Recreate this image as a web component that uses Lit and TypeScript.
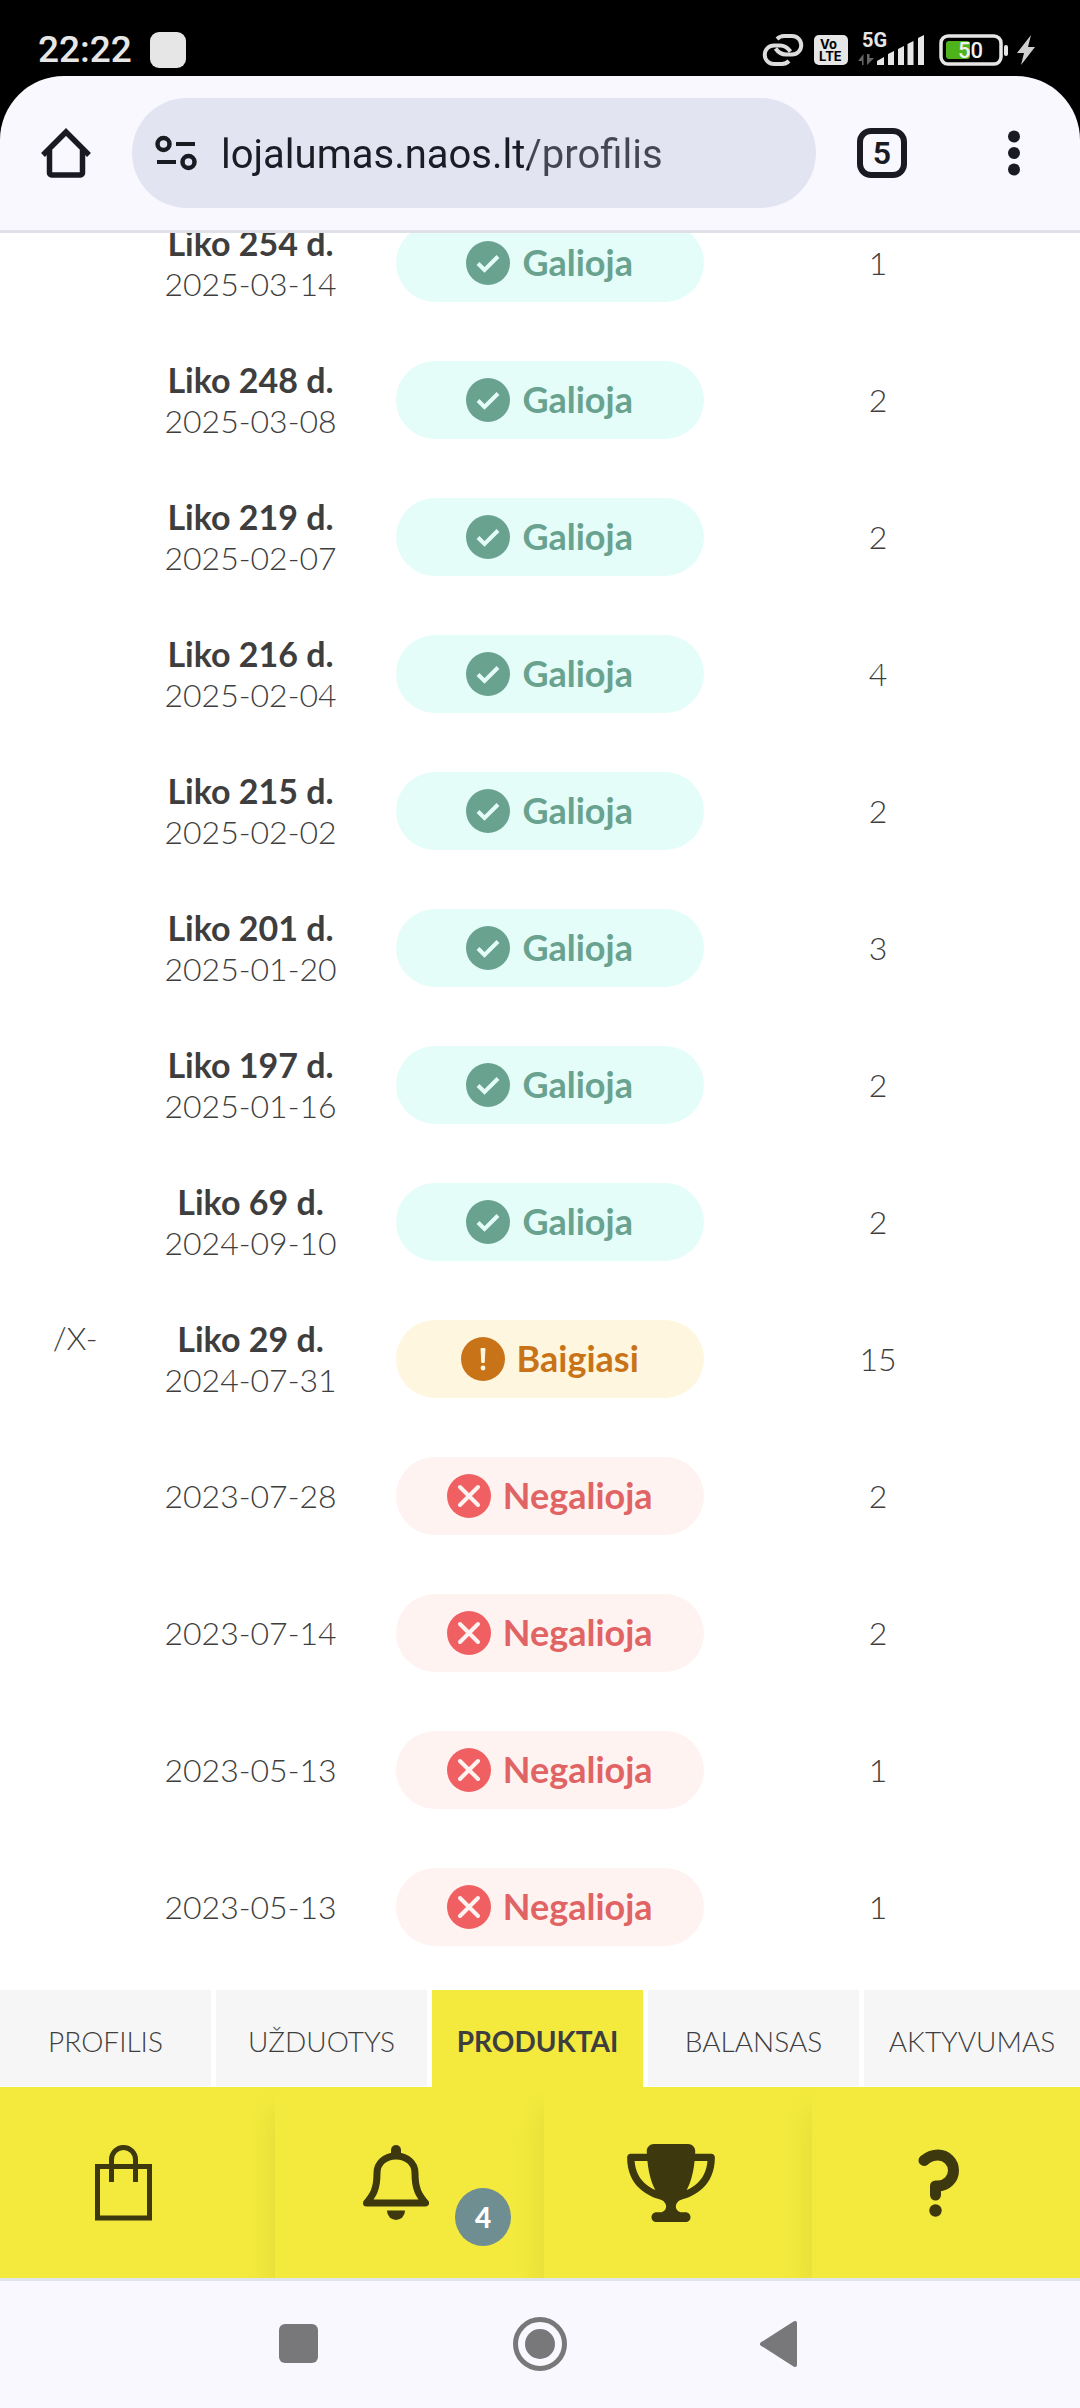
import { LitElement, html, css, svg } from "lit";
import { customElement, property } from "lit/decorators.js";
import { classMap } from "lit/directives/class-map.js";

type Status = "valid" | "ending" | "expired";

interface ProductRow {
  product?: string;
  left?: number;
  date: string;
  status: Status;
  count: number;
}

const ROWS: ProductRow[] = [
  { left: 254, date: "2025-03-14", status: "valid", count: 1 },
  { left: 248, date: "2025-03-08", status: "valid", count: 2 },
  { left: 219, date: "2025-02-07", status: "valid", count: 2 },
  { left: 216, date: "2025-02-04", status: "valid", count: 4 },
  { left: 215, date: "2025-02-02", status: "valid", count: 2 },
  { left: 201, date: "2025-01-20", status: "valid", count: 3 },
  { left: 197, date: "2025-01-16", status: "valid", count: 2 },
  { left: 69, date: "2024-09-10", status: "valid", count: 2 },
  { product: "/X-", left: 29, date: "2024-07-31", status: "ending", count: 15 },
  { date: "2023-07-28", status: "expired", count: 2 },
  { date: "2023-07-14", status: "expired", count: 2 },
  { date: "2023-05-13", status: "expired", count: 1 },
  { date: "2023-05-13", status: "expired", count: 1 },
];

const LABELS: Record<Status, string> = {
  valid: "Galioja",
  ending: "Baigiasi",
  expired: "Negalioja",
};

const MARKS = {
  valid: svg`<path d="M12 22.500L18.500 29L32 15.500" fill="none" stroke="#e4fdf9" stroke-width="4"/>`,
  ending: svg`<path d="M20 11.500h4l-.8 14h-2.400z" fill="#fff6e0" stroke="#fff6e0" stroke-linejoin="round"/><circle cx="22" cy="31" r="2.400" fill="#fff6e0"/>`,
  expired: svg`<path d="M13 13L31 31M31 13L13 31" fill="none" stroke="#fff3f2" stroke-width="4" stroke-linecap="round"/>`,
};

@customElement("status-bar")
export class StatusBar extends LitElement {
  static styles = css`
    :host {
      display: flex;
      align-items: center;
      justify-content: space-between;
      height: 76px;
      padding: 23px 44px 0 38px;
      box-sizing: border-box;
      background: #000;
      color: #e6e6e6;
      font-family: Roboto, "Liberation Sans", sans-serif;
    }
    .side {
      display: flex;
      align-items: center;
    }
    .left {
      gap: 18px;
    }
    .right {
      gap: 10px;
    }
    .time {
      font-size: 37px;
      line-height: 44px;
      font-weight: 500;
    }
    .app {
      width: 36px;
      height: 36px;
      border-radius: 9px;
      background: #e6e6e6;
    }
    svg {
      display: block;
    }
  `;

  render() {
    return html`
      <div class="side left">
        <span class="time">22:22</span>
        <span class="app"></span>
      </div>
      <div class="side right">
        <svg width="42" height="34" viewBox="0 0 42 34" fill="none" stroke="#dcdcdc" stroke-width="4">
          <path d="M15 6C17 4 19 3 22 3h8a9.200 9.200 0 0 1 0 18.500h-6C19 21.500 16 19 13.500 15.500" />
          <path d="M27 28C25 30 23 31 20 31h-8a9.200 9.200 0 0 1 0-18.500h6C23 12.500 26 15 28.500 18.500" />
        </svg>
        <svg width="34" height="34" viewBox="0 0 34 34" font-family="Inter, sans-serif" font-weight="700" fill="#000">
          <rect y="2" width="34" height="30" rx="5" fill="#e6e6e6" />
          <text x="6" y="16" font-size="13">Vo</text>
          <text x="5" y="28" font-size="13">LTE</text>
        </svg>
        <svg width="68" height="40" viewBox="0 -3 68 40" fill="#e6e6e6">
          <text x="4" y="14" font-size="20" font-weight="700" font-family="Roboto, sans-serif">5G</text>
          <path d="M0 28l5.500-7v11H4v-4zM9 21h2.500v4H16L9 32z" fill="#666" />
          <path d="M19 32v-4l7-4v8h-6zM30 21l6-3v14h-6zM40 16l6-3v19h-6zM49.500 11l6-3v24h-6zM60 5l6-3v30h-6z" />
        </svg>
        <svg width="74" height="34" viewBox="-3 0 74 34">
          <rect x="2" y="3" width="60" height="28" rx="7" fill="none" stroke="#e6e6e6" stroke-width="3.500" />
          <rect x="7" y="8" width="24" height="18" rx="3" fill="#4eb31b" />
          <rect x="65" y="12" width="4" height="11" rx="2" fill="#e6e6e6" />
          <text x="19" y="25" font-size="22" font-weight="500" font-family="Roboto, sans-serif" fill="#f0f0f0">50</text>
        </svg>
        <svg class="bolt" width="16" height="34" viewBox="4 0 16 34" overflow="visible">
          <path d="M15 2L1 20h7L5 32l14-18h-7z" fill="#cfcfcf" />
        </svg>
      </div>
    `;
  }
}

@customElement("browser-bar")
export class BrowserBar extends LitElement {
  static styles = css`
    :host {
      display: block;
      background: #000;
      font-family: Roboto, "Liberation Sans", sans-serif;
    }
    .bar {
      display: flex;
      align-items: center;
      gap: 41px;
      padding: 22px 52px 22px 41px;
      border-bottom: 3px solid #e0e1e8;
      border-radius: 64px 64px 0 0;
      background: #f9f8ff;
    }
    .icon {
      display: flex;
      align-items: center;
      justify-content: center;
      padding: 0;
      border: 0;
      background: none;
      color: #1a1b22;
      font: inherit;
    }
    .tabs {
      width: 50px;
      height: 50px;
      box-sizing: border-box;
      border: 6px solid #1a1b22;
      border-radius: 14px;
      font-size: 32px;
      line-height: 38px;
      font-weight: 600;
    }
    .more {
      width: 28px;
      margin-left: 52px;
    }
    .address {
      display: flex;
      flex: 1;
      align-items: center;
      gap: 24px;
      min-width: 0;
      height: 110px;
      padding: 0 23px;
      box-sizing: border-box;
      border-radius: 55px;
      background: #e2e4f1;
    }
    .url {
      flex: 1;
      min-width: 0;
      height: 64px;
      padding: 3px 0 0;
      box-sizing: border-box;
      border: 0;
      outline: 0;
      background: linear-gradient(90deg, #1b1c25 308px, #444654 308px);
      background-clip: text;
      -webkit-background-clip: text;
      color: transparent;
      font: 400 40px/60px Roboto, "Liberation Sans", sans-serif;
    }
    svg {
      display: block;
    }
  `;

  render() {
    return html`
      <div class="bar">
        <button class="icon" aria-label="Home">
          <svg width="50" height="50" viewBox="0 0 50 50" fill="none" stroke="#1a1b22" stroke-width="5.500">
            <path d="M8.500 22v23a2 2 0 0 0 2 2h29a2 2 0 0 0 2-2V22" />
            <path d="M2 27L25 4L48 27" />
          </svg>
        </button>
        <div class="address">
          <svg width="42" height="36" viewBox="0 0 42 36" fill="none" stroke="#1a1b22" stroke-width="4.500">
            <circle cx="8.500" cy="9" r="6" />
            <path d="M21 9h19M2 27h19" stroke-width="4" />
            <circle cx="33.500" cy="27" r="6" />
          </svg>
          <input class="url" type="text" aria-label="Address" value="lojalumas.naos.lt/profilis" />
        </div>
        <button class="icon tabs" aria-label="Tabs">5</button>
        <button class="icon more" aria-label="Menu">
          <svg width="12" height="46" viewBox="0 0 12 46" fill="#1a1b22">
            <circle cx="6" cy="6.500" r="6" />
            <circle cx="6" cy="23" r="6" />
            <circle cx="6" cy="39.500" r="6" />
          </svg>
        </button>
      </div>
    `;
  }
}

@customElement("status-pill")
export class StatusPill extends LitElement {
  static styles = css`
    :host {
      display: block;
    }
    .pill {
      display: flex;
      align-items: center;
      justify-content: center;
      gap: 12px;
      height: 78px;
      border-radius: 39px;
      font-size: 36px;
      font-weight: 700;
    }
    .valid {
      background: #e4fdf9;
      color: #69a28f;
    }
    .ending {
      background: #fff6e0;
      color: #c97318;
    }
    .expired {
      background: #fff3f2;
      color: #e16464;
    }
    .disc {
      fill: currentColor;
    }
    .expired .disc {
      fill: #f06062;
    }
  `;

  @property() status: Status = "valid";

  render() {
    return html`
      <div class="pill ${this.status}">
        <svg width="44" height="44" viewBox="0 0 44 44">
          <circle class="disc" cx="22" cy="22" r="22" />
          ${MARKS[this.status]}
        </svg>
        <span>${LABELS[this.status]}</span>
      </div>
    `;
  }
}

@customElement("product-table")
export class ProductTable extends LitElement {
  static styles = css`
    :host {
      display: block;
      overflow: hidden;
    }
    table {
      width: 100%;
      margin-top: -39px;
      border-collapse: collapse;
      table-layout: fixed;
      text-align: center;
    }
    td {
      height: 137px;
      box-sizing: border-box;
      padding: 0;
      line-height: 41px;
    }
    .c-product {
      width: 12%;
    }
    .c-date {
      width: 22.4%;
    }
    .c-status {
      width: 33%;
    }
    .c-count {
      width: 27.8%;
    }
    .product {
      padding: 27px 32px 0 0;
      text-align: right;
      vertical-align: top;
    }
    .status {
      padding: 0 24px;
    }
    strong {
      display: block;
      font-size: 34px;
      font-weight: 700;
    }
  `;

  render() {
    return html`
      <table>
        <colgroup>
          <col class="c-product" />
          <col class="c-date" />
          <col class="c-status" />
          <col class="c-count" />
          <col />
        </colgroup>
        <tbody>
          ${ROWS.map(
            (r) => html`
              <tr>
                <td class="product">${r.product ?? ""}</td>
                <td>${r.left ? html`<strong>Liko ${r.left} d.</strong>` : ""}${r.date}</td>
                <td class="status"><status-pill status=${r.status}></status-pill></td>
                <td>${r.count}</td>
                <td></td>
              </tr>
            `
          )}
        </tbody>
      </table>
    `;
  }
}

@customElement("app-root")
export class AppRoot extends LitElement {
  static styles = css`
    :host {
      display: flex;
      flex-direction: column;
      min-height: 100vh;
      background: #fff;
      color: #3e3e3e;
      font-family: Lato, "Liberation Sans", sans-serif;
      font-size: 32px;
      font-weight: 300;
    }
    main {
      flex: 1;
    }
    .tabs {
      display: grid;
      grid-template-columns: repeat(5, minmax(0, 1fr));
    }
    .tab {
      height: 97px;
      box-sizing: border-box;
      border-right: 5px solid #fff;
      border-bottom: 1px solid #fff;
      background: #f6f6f6;
      color: inherit;
      font-size: 28px;
      line-height: 102px;
      text-align: center;
      text-decoration: none;
    }
    .tab:last-child {
      border-right: 0;
    }
    .current {
      border-bottom: 0;
      background: #f3ea3d;
      font-weight: 700;
    }
    .dock {
      display: grid;
      grid-template-columns: 275fr 269fr 268fr 268fr;
      overflow: hidden;
      border-bottom: 3px solid #dfe5ea;
    }
    .item {
      position: relative;
      display: flex;
      align-items: center;
      justify-content: center;
      height: 191px;
      padding: 0 27px 0 0;
      border: 0;
      box-sizing: border-box;
      background: #f3ea3d;
      box-shadow: 0 24px 30px rgba(0, 0, 0, 0.08);
      font: inherit;
    }
    .narrow {
      padding-right: 14px;
    }
    .badge {
      position: absolute;
      right: 33px;
      bottom: 32px;
      width: 56px;
      height: 58px;
      border-radius: 50%;
      background: #6e8e91;
      color: #fff;
      font-size: 28px;
      line-height: 58px;
      font-weight: 900;
      text-align: center;
    }
    .system {
      display: grid;
      grid-template-columns: repeat(3, 242px);
      justify-content: center;
      align-items: center;
      height: 127px;
      padding-bottom: 2px;
      box-sizing: border-box;
      background: #f9f8ff;
    }
    .key {
      display: flex;
      justify-content: center;
      padding: 0;
      border: 0;
      background: none;
    }
    svg {
      display: block;
    }
  `;

  private tabs = ["PROFILIS", "UŽDUOTYS", "PRODUKTAI", "BALANSAS", "AKTYVUMAS"];

  render() {
    return html`
      <status-bar></status-bar>
      <browser-bar></browser-bar>
      <main><product-table></product-table></main>
      <nav class="tabs">
        ${this.tabs.map(
          (t) => html`<a href="#${t.toLowerCase()}" class=${classMap({ tab: true, current: t === "PRODUKTAI" })}>${t}</a>`
        )}
      </nav>
      <div class="dock">
        <button class="item" aria-label="Parduotuvė">
          <svg width="58" height="76" viewBox="0 0 58 76" fill="none" stroke="#3d380e" stroke-width="5">
            <path d="M2.500 21.500h52v51.500h-52zM16.500 37V14.500a12 12 0 0 1 24 0V37" />
          </svg>
        </button>
        <button class="item" aria-label="Pranešimai">
          <svg width="66" height="76" viewBox="0 0 66 76" fill="#3d380e">
            <rect x="28" y="0" width="10" height="14" rx="5" />
            <path d="M3.500 58C9 51 14 46 14 28C14 18 22 11 33 11C44 11 52 18 52 28C52 46 57 51 62.500 58Z" fill="none" stroke="#3d380e" stroke-width="7" stroke-linejoin="round" />
            <path d="M24 65.500h18a9 9.500 0 0 1-18 0z" />
          </svg>
          <span class="badge">4</span>
        </button>
        <button class="item narrow" aria-label="Apdovanojimai">
          <svg width="88" height="78" viewBox="0 0 576 512" fill="#3d380e">
            <path d="M400 0L176 0c-26.500 0-48.100 21.800-47.100 48.200c.2 5.300 .4 10.600 .7 15.800L24 64C10.700 64 0 74.700 0 88c0 92.600 33.500 157 78.500 200.700c44.300 43.100 98.300 64.800 138.100 75.800c23.400 6.500 39.400 26 39.400 45.600c0 20.900-17 37.900-37.900 37.900L192 448c-17.700 0-32 14.300-32 32s14.300 32 32 32l192 0c17.700 0 32-14.300 32-32s-14.300-32-32-32l-26.100 0C337 448 320 431 320 410.100c0-19.600 15.900-39.200 39.400-45.600c39.900-11 93.900-32.700 138.200-75.800C542.500 245 576 180.600 576 88c0-13.300-10.700-24-24-24L446.400 64c.3-5.200 .5-10.400 .7-15.800C448.100 21.800 426.500 0 400 0zM48.900 112l84.400 0c9.100 90.100 29.200 150.300 51.900 190.600c-24.900-11-50.800-26.500-73.200-48.300c-32-31.100-58-76-63-142.300zM464.100 254.300c-22.400 21.800-48.300 37.300-73.200 48.300c22.700-40.300 42.800-100.500 51.900-190.600l84.400 0c-5.100 66.300-31.100 111.200-63 142.300z" />
          </svg>
        </button>
        <button class="item narrow" aria-label="Pagalba">
          <svg width="42" height="68" viewBox="0 0 42 68" fill="none" stroke="#3d380e" stroke-width="11" stroke-linecap="round" stroke-linejoin="round">
            <path d="M6 11.500C10 8 14 6 20 6A15.500 15.500 0 0 1 20 37H17.500V46" />
            <circle cx="17.500" cy="61.500" r="6.200" fill="#3d380e" stroke="none" />
          </svg>
        </button>
      </div>
      <div class="system">
        <button class="key" aria-label="Recent">
          <svg width="39" height="39"><rect width="39" height="39" rx="6" fill="#78777a" /></svg>
        </button>
        <button class="key" aria-label="Home">
          <svg width="54" height="54" viewBox="0 0 54 54">
            <circle cx="27" cy="27" r="24.500" fill="none" stroke="#78777a" stroke-width="5" />
            <circle cx="27" cy="27" r="15" fill="#78777a" />
          </svg>
        </button>
        <button class="key" aria-label="Back">
          <svg width="44" height="46" viewBox="0 0 44 46">
            <path d="M2 23L35 2V44Z" fill="#78777a" stroke="#78777a" stroke-width="4" stroke-linejoin="round" />
          </svg>
        </button>
      </div>
    `;
  }
}
